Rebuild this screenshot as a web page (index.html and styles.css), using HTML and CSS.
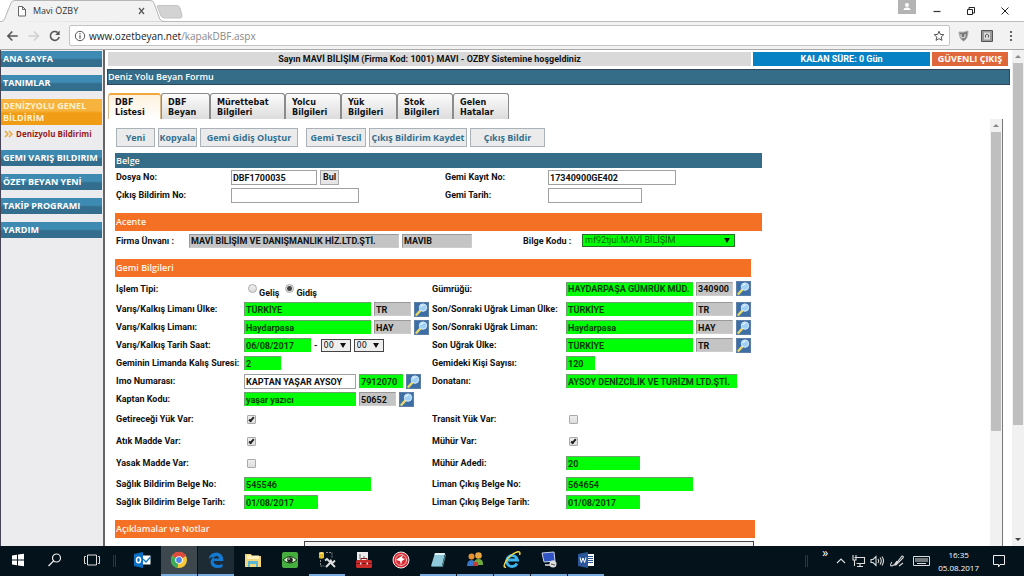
FILE: index.html
```html
<!DOCTYPE html>
<html lang="tr">
<head>
<meta charset="utf-8">
<title>Mavi ÖZBY</title>
<link rel="stylesheet" href="styles.css">
</head>
<body>
<svg class="defs" aria-hidden="true">
  <symbol id="lens" viewBox="0 0 15 15">
    <rect width="15" height="15" fill="#3d6ea5"/>
    <rect x=".5" y=".5" width="14" height="14" fill="none" stroke="#5c7fa8"/>
    <path d="M2.5 12.8 6.3 8.6" stroke="#e8d86a" stroke-width="2.4" stroke-linecap="round"/>
    <circle cx="9" cy="5.6" r="3.7" fill="#9fd0f5" stroke="#d8ecfb" stroke-width="1"/>
    <path d="M7 5a2.4 2.4 0 0 1 2.4-1.8" stroke="#fff" fill="none"/>
  </symbol>
</svg>

<header class="browser">
  <div class="tabstrip">
    <svg class="tab-shape" viewBox="0 0 190 22">
      <path d="M0 22C5 21 5 18 6.500 14L11 3Q12 .5 15 .5H150Q153 .5 154 3L159 17Q160 21.500 165 21.500" fill="#f2f2f2" stroke="#b5b5b5"/>
      <path d="M157 6Q157.500 5.500 159 5.500H177Q179 5.500 180 8L182 15Q182.500 18 180 18H165Q162 18 161 16Z" fill="#d3d3d3" stroke="#c4c4c4"/>
      <path d="M18.500 6.500h4l3 3v6.500h-7zM22.500 6.500v3h3" fill="#fff" stroke="#666"/>
      <path d="m139 8 5 6m0-6-5 6" stroke="#555" stroke-width="1.200"/>
    </svg>
    <span class="tab-title">Mavi ÖZBY</span>
    <div class="window-controls">
      <svg class="person" viewBox="0 0 18 14"><path fill="#b4b4b4" d="M0 0h18v14H0z"/><circle cx="9" cy="5" r="2" fill="#fff"/><path d="M5.500 10q0-2.500 3.500-2.500t3.500 2.500z" fill="#fff"/></svg>
      <svg viewBox="0 0 10 10"><path d="M1.500 5.500h7" stroke="#333" stroke-width="1.200"/></svg>
      <svg viewBox="0 0 10 10"><path d="M1.500 3.500h5v5h-5zM3 3V1.500h5.500V7H7" fill="none" stroke="#222"/></svg>
      <svg viewBox="0 0 10 10"><path d="m1.500 1.500 7 7m0-7-7 7" stroke="#222"/></svg>
    </div>
  </div>
  <div class="toolbar">
    <svg class="nav" viewBox="0 0 70 16">
      <path d="M18 8H8m4.500-4.500L8 8l4.500 4.500" fill="none" stroke="#555" stroke-width="1.600"/>
      <path d="M29 8h10m-4.500-4.500L39 8l-4.500 4.500" fill="none" stroke="#d0d0d0" stroke-width="1.600"/>
      <path d="M58.500 4.500A4.500 4.500 0 1 0 60 9" fill="none" stroke="#555" stroke-width="1.600"/><path d="M60.500 2.500v4.500H56z" fill="#555"/>
    </svg>
    <div class="address">
      <svg class="info" viewBox="0 0 12 12"><circle cx="6" cy="6" r="4.700" fill="none" stroke="#555"/><path d="M6 5.200v3.500M6 3v1.200" stroke="#555" stroke-width="1.200"/></svg>
      <span class="url">www.ozetbeyan.net<span class="path">/kapakDBF.aspx</span></span>
      <svg class="star" viewBox="0 0 12 12"><path d="m6 1.200 1.300 3.200 3.500.3-2.600 2.300.8 3.400L6 8.600l-3 1.800.8-3.400L1.200 4.700l3.500-.3z" fill="none" stroke="#555"/></svg>
    </div>
    <svg class="extensions" viewBox="0 0 74 16">
      <path d="M9 4q4.500 1 9-1-.2 8-4.500 10Q9.500 11 9 4z" fill="#777" stroke="#aaa"/><path d="M11 6v3q2 2 4 0V6" stroke="#eee" fill="none"/>
      <path d="M31.500 2.500h11v11h-11z" fill="#999" stroke="#555"/><path d="M34 4.500h6v7h-6z" fill="#ddd"/><path d="M35.500 9.500V7q1-1.500 1.500 0 .5-1.500 1.500 0v2.500" stroke="#555" fill="none"/>
      <g fill="#444"><circle cx="61" cy="4" r="1.100"/><circle cx="61" cy="8" r="1.100"/><circle cx="61" cy="12" r="1.100"/></g>
    </svg>
  </div>
</header>

<div class="page">
  <nav class="sidebar">
    <a class="menu" href="#">ANA SAYFA</a>
    <a class="menu" href="#">TANIMLAR</a>
    <a class="menu active" href="#">DENİZYOLU GENEL BİLDİRİM</a>
    <a class="submenu" href="#"><svg viewBox="0 0 9 8"><path d="m1 1 3 3-3 3M5 1l3 3-3 3" fill="none" stroke="#e9a73c" stroke-width="1.500"/></svg>Denizyolu Bildirimi</a>
    <a class="menu" href="#">GEMI VARIŞ BILDIRIM</a>
    <a class="menu" href="#">ÖZET BEYAN YENİ</a>
    <a class="menu" href="#">TAKİP PROGRAMI</a>
    <a class="menu" href="#">YARDIM</a>
  </nav>

  <main class="main">
    <div class="status">
      <div class="welcome">Sayın MAVİ BİLİŞİM (Firma Kod: 1001) MAVI - OZBY Sistemine hoşgeldiniz</div>
      <div class="remaining">KALAN SÜRE: 0 Gün</div>
      <a class="logout" href="#">GÜVENLI ÇIKIŞ</a>
    </div>
    <h1 class="title">Deniz Yolu Beyan Formu</h1>

    <div class="tabs">
      <button class="tab w-s current">DBF<br>Listesi</button>
      <button class="tab w-t">DBF<br>Beyan</button>
      <button class="tab w-l">Mürettebat<br>Bilgileri</button>
      <button class="tab w-m">Yolcu<br>Bilgileri</button>
      <button class="tab w-m">Yük<br>Bilgileri</button>
      <button class="tab w-m">Stok<br>Bilgileri</button>
      <button class="tab w-m">Gelen<br>Hatalar</button>
    </div>

    <div class="frame">
      <form class="form">
        <div class="actions">
          <button type="button" class="b40">Yeni</button>
          <button type="button" class="b40">Kopyala</button>
          <button type="button" class="b98 spaced">Gemi Gidiş Oluştur</button>
          <button type="button" class="b60">Gemi Tescil</button>
          <button type="button" class="b98">Çıkış Bildirim Kaydet</button>
          <button type="button" class="b75">Çıkış Bildir</button>
        </div>

        <h2 class="bar blue wide">Belge</h2>
        <div class="row belge">
          <label for="dosya">Dosya No:</label>
          <div class="cell"><input id="dosya" class="i86" value="DBF1700035"><button type="button" class="bul">Bul</button></div>
          <label for="kayit">Gemi Kayıt No:</label>
          <div class="cell"><input id="kayit" class="i128" value="17340900GE402"></div>
        </div>
        <div class="row belge">
          <label for="cikis">Çıkış Bildirim No:</label>
          <div class="cell"><input id="cikis" class="i128"></div>
          <label for="tarih">Gemi Tarih:</label>
          <div class="cell"><input id="tarih" class="i94"></div>
        </div>

        <h2 class="bar acente wide">Acente</h2>
        <div class="row agency">
          <label for="firma">Firma Ünvanı :</label>
          <div class="cell"><input id="firma" class="gray i210" value="MAVİ BİLİŞİM VE DANIŞMANLIK HİZ.LTD.ŞTİ."><input aria-label="Firma Kodu" class="gray i70" value="MAVIB"></div>
          <label for="bilge">Bilge Kodu :</label>
          <div class="cell"><span class="pick bilge"><select id="bilge"><option>mf92tjul:MAVİ BİLİŞİM</option></select></span></div>
        </div>

        <h2 class="bar gemi">Gemi Bilgileri</h2>
        <div class="row first">
          <span class="label">İşlem Tipi:</span>
          <div class="cell radios"><input type="radio" name="tip" id="gelis"><label for="gelis">Geliş</label><input type="radio" name="tip" id="gidis" checked><label for="gidis">Gidiş</label></div>
          <label for="gumruk">Gümrüğü:</label>
          <div class="cell"><input id="gumruk" class="green i127" value="HAYDARPAŞA GÜMRÜK MÜD."><input aria-label="Gümrük Kodu" class="gray i38" value="340900"><button type="button" class="find" aria-label="Gümrük ara"><svg><use href="#lens"/></svg></button></div>
        </div>
        <div class="row">
          <label for="vulke">Varış/Kalkış Limanı Ülke:</label>
          <div class="cell"><input id="vulke" class="green i127" value="TÜRKİYE"><input aria-label="Ülke Kodu" class="gray i38" value="TR"><button type="button" class="find" aria-label="Ülke ara"><svg><use href="#lens"/></svg></button></div>
          <label for="sulke">Son/Sonraki Uğrak Liman Ülke:</label>
          <div class="cell"><input id="sulke" class="green i127" value="TÜRKİYE"><input aria-label="Uğrak Ülke Kodu" class="gray i38" value="TR"><button type="button" class="find" aria-label="Uğrak ülke ara"><svg><use href="#lens"/></svg></button></div>
        </div>
        <div class="row">
          <label for="vliman">Varış/Kalkış Limanı:</label>
          <div class="cell"><input id="vliman" class="green i127" value="Haydarpasa"><input aria-label="Liman Kodu" class="gray i38" value="HAY"><button type="button" class="find" aria-label="Liman ara"><svg><use href="#lens"/></svg></button></div>
          <label for="sliman">Son/Sonraki Uğrak Liman:</label>
          <div class="cell"><input id="sliman" class="green i127" value="Haydarpasa"><input aria-label="Uğrak Liman Kodu" class="gray i38" value="HAY"><button type="button" class="find" aria-label="Uğrak liman ara"><svg><use href="#lens"/></svg></button></div>
        </div>
        <div class="row">
          <label for="vtarih">Varış/Kalkış Tarih Saat:</label>
          <div class="cell"><input id="vtarih" class="green i66" value="06/08/2017"><span>-</span><span class="pick"><select aria-label="Saat"><option>00</option></select></span><span class="pick"><select aria-label="Dakika"><option>00</option></select></span></div>
          <label for="sonulke">Son Uğrak Ülke:</label>
          <div class="cell"><input id="sonulke" class="green i127" value="TÜRKİYE"><input aria-label="Son Ülke Kodu" class="gray i38" value="TR"><button type="button" class="find" aria-label="Son ülke ara"><svg><use href="#lens"/></svg></button></div>
        </div>
        <div class="row">
          <label for="kalis">Geminin Limanda Kalış Suresi:</label>
          <div class="cell"><input id="kalis" class="green i38" value="2"></div>
          <label for="kisi">Gemideki Kişi Sayısı:</label>
          <div class="cell"><input id="kisi" class="green i30" value="120"></div>
        </div>
        <div class="row">
          <label for="imo">Imo Numarası:</label>
          <div class="cell"><input id="imo" class="i112" value="KAPTAN YAŞAR AYSOY"><input aria-label="Imo Kodu" class="green i44" value="7912070"><button type="button" class="find" aria-label="Imo ara"><svg><use href="#lens"/></svg></button></div>
          <label for="donatan">Donatanı:</label>
          <div class="cell"><input id="donatan" class="green i171" value="AYSOY DENİZCİLİK VE TURİZM LTD.ŞTİ."></div>
        </div>
        <div class="row">
          <label for="kaptan">Kaptan Kodu:</label>
          <div class="cell"><input id="kaptan" class="green i112" value="yaşar yazıcı"><input aria-label="Kaptan No" class="gray i38" value="50652"><button type="button" class="find" aria-label="Kaptan ara"><svg><use href="#lens"/></svg></button></div>
        </div>
        <div class="row tall">
          <label for="yuk">Getireceği Yük Var:</label>
          <div class="cell"><input type="checkbox" id="yuk" checked></div>
          <label for="transit">Transit Yük Var:</label>
          <div class="cell"><input type="checkbox" id="transit"></div>
        </div>
        <div class="row tall">
          <label for="atik">Atık Madde Var:</label>
          <div class="cell"><input type="checkbox" id="atik" checked></div>
          <label for="muhur">Mühür Var:</label>
          <div class="cell"><input type="checkbox" id="muhur" checked></div>
        </div>
        <div class="row tall">
          <label for="yasak">Yasak Madde Var:</label>
          <div class="cell"><input type="checkbox" id="yasak"></div>
          <label for="adet">Mühür Adedi:</label>
          <div class="cell"><input id="adet" class="green i74" value="20"></div>
        </div>
        <div class="row papers">
          <label for="sno">Sağlık Bildirim Belge No:</label>
          <div class="cell"><input id="sno" class="green i127" value="545546"></div>
          <label for="lno">Liman Çıkış Belge No:</label>
          <div class="cell"><input id="lno" class="green i127" value="564654"></div>
        </div>
        <div class="row">
          <label for="starih">Sağlık Bildirim Belge Tarih:</label>
          <div class="cell"><input id="starih" class="green i74" value="01/08/2017"></div>
          <label for="ltarih">Liman Çıkış Belge Tarih:</label>
          <div class="cell"><input id="ltarih" class="green i74" value="01/08/2017"></div>
        </div>

        <h2 class="bar notes">Açıklamalar ve Notlar</h2>
        <textarea class="note" aria-label="Açıklamalar ve Notlar"></textarea>
      </form>
      <div class="scroll inner"><i class="up"></i><i class="thumb"></i></div>
    </div>
  </main>
  <div class="scroll outer"><i class="up"></i><i class="thumb"></i><i class="down"></i></div>
</div>

<footer class="taskbar">
  <div class="apps">
    <button class="app" aria-label="Başlat"><svg viewBox="0 0 18 18"><path d="m3 4.500 5-.7v4.700H3zm6-.9 6-.8v5.700H9zM3 9.500h5v4.700l-5-.7zm6 0h6v5.700l-6-.8z" fill="#fff"/></svg></button>
    <button class="app" aria-label="Ara"><svg viewBox="0 0 18 18"><circle cx="10.500" cy="7" r="4" fill="none" stroke="#eee" stroke-width="1.200"/><path d="m7.500 10-5 5" stroke="#eee" stroke-width="1.300"/></svg></button>
    <button class="app" aria-label="Görev görünümü"><svg viewBox="0 0 18 18"><path d="M4.500 4h9v10h-9zM3 5.500H1.500v7H3m12-7h1.500v7H15" fill="none" stroke="#ddd"/></svg></button>
    <span class="divider"></span>
    <button class="app" aria-label="Outlook"><svg viewBox="0 0 18 18"><path d="M8 4.500h9.500v9H8z" fill="#fff"/><path d="m10 8 3 3 4.500-5" stroke="#1479c9" stroke-width="1.300" fill="none"/><path d="m1 3 9-2v16l-9-2z" fill="#0b6fc2"/><ellipse cx="5.500" cy="9" rx="2" ry="2.800" fill="none" stroke="#fff" stroke-width="1.500"/></svg></button>
    <button class="app lit run" aria-label="Chrome"><svg viewBox="0 0 18 18"><circle cx="9" cy="9" r="8" fill="#f4c93a"/><path d="M9 9 2 5A8 8 0 0 1 16 5z" fill="#dd4b3e"/><path d="M9 9 2 5a8 8 0 0 0 5.500 12z" fill="#3faa59"/><circle cx="9" cy="9" r="3.800" fill="#fff"/><circle cx="9" cy="9" r="2.900" fill="#4a87e8"/></svg></button>
    <button class="app lit2 run" aria-label="Edge"><svg viewBox="0 0 18 18"><path d="M1.500 8Q3 1.500 9.500 1.500q7 .5 7 8.500H6.500q.5 4 5 4 2 0 4-1v3q-2 1-4.500 1Q4 17 3.500 11 3.500 8 6.500 6 3.500 6 1.500 8zm5-.5h5.500Q12 5 9.500 5T6.500 7.500z" fill="#1479d1"/></svg></button>
    <button class="app" aria-label="Dosya Gezgini"><svg viewBox="0 0 18 18"><path d="M1 3h6l1 2h9v11H1z" fill="#f3d57c"/><path d="M3 4.500h12V8H3z" fill="#fff2bd"/><path d="M4 10h10v6h-2v-3H6v3H4z" fill="#5ab6d5"/></svg></button>
    <button class="app" aria-label="Göz"><svg viewBox="0 0 18 18"><rect x="1" y="1" width="16" height="16" rx="2" fill="#46ad3f"/><path d="M2 9q7-7 14 0-7 6-14 0z" fill="#d8f0c8" stroke="#143c12"/><circle cx="9" cy="9" r="2.800" fill="#222"/><circle cx="8" cy="8" r=".8" fill="#fff"/></svg></button>
    <button class="app run" aria-label="SQL"><svg viewBox="0 0 18 18"><path d="M1 2v5q2.500 1.500 5 0V2z" fill="#e5b92f"/><ellipse cx="3.500" cy="2" rx="2.500" ry="1" fill="#ffe27a"/><path d="M8 1.500h6v5M2.500 9v6h4" fill="none" stroke="#888" stroke-dasharray="2 1"/><path d="m8 16 6-6" stroke="#ddd" stroke-width="2"/><path d="M13 8.500q-1 3 2 3l2-2M7 9.500l2-1.500 2 2 6 6" fill="none" stroke="#ddd" stroke-width="1.800"/></svg></button>
    <button class="app" aria-label="Araçlar"><svg viewBox="0 0 18 18"><path d="M2 1h11v9H2z" fill="#eee"/><path d="M4 3h2v5H4zm4 2h2v3H8z" fill="#aaa"/><rect x="1" y="9" width="16" height="8" rx="1.500" fill="#c92a2a"/><path d="M6 9V7.500h6V9M1 12.500h16" fill="none" stroke="#821515"/><path d="M5 11.500h1.500v2H5zm6.500 0H13v2h-1.500z" fill="#ddd"/></svg></button>
    <button class="app" aria-label="Radar"><svg viewBox="0 0 18 18"><circle cx="9" cy="9" r="8" fill="#d52b35" stroke="#eee"/><circle cx="9" cy="9" r="5.500" fill="none" stroke="#f5b0b0"/><path d="m4 9 7-5-1 3 3 1-3 2-1 4-1-4z" fill="#fff"/></svg></button>
    <button class="app run" aria-label="Not Defteri"><svg viewBox="0 0 18 18"><path d="M6 2h10l-3 13H2z" fill="#8fc9da"/><path d="M6 2h10l-.5 2H5.500z" fill="#e4f2f5"/><path d="M2 15h11l3-12 1 1-3 12H3z" fill="#4b808f"/></svg></button>
    <button class="app run" aria-label="Kişiler"><svg viewBox="0 0 18 18"><circle cx="5.500" cy="5.500" r="3" fill="#e99131"/><circle cx="12.500" cy="4.500" r="3.300" fill="#e9a540"/><path d="M1 15q0-6 4.500-6T10 15z" fill="#3876c9"/><path d="M8 13q0-5 4.500-5t4.500 5v1H8z" fill="#70aa3c"/><path d="M7 11h5v4H7z" fill="#c63b35"/></svg></button>
    <button class="app run" aria-label="Internet Explorer"><svg viewBox="0 0 18 18"><path d="M14 12.500A5.500 5.500 0 1 1 14.500 9H5" fill="none" stroke="#3db4ec" stroke-width="2.800"/><path d="M3 16Q0 17 2 12 7 3 14 1q4-1 2.500 3" fill="none" stroke="#f1d34a" stroke-width="1.500"/></svg></button>
    <button class="app run" aria-label="Uzak Masaüstü"><svg viewBox="0 0 18 18"><path d="m2 2 12-1 1 9-11 1z" fill="#3154c4" stroke="#c7d1e8"/><path d="M5 13h6v2H5z" fill="#aaa"/><circle cx="13" cy="13" r="3.500" fill="#ddd"/><path d="m11 13 4 1" stroke="#555"/></svg></button>
    <button class="app run" aria-label="Word"><svg viewBox="0 0 18 18"><path d="M9 3h8v12H9z" fill="#fff"/><path d="M11 5.500h5m-5 2h5m-5 2h5m-5 2h5" stroke="#2b579a"/><path d="m1 3 10-2v16L1 15z" fill="#2b579a"/><path d="m3 6.500 1.300 5L6 7l1.600 4.500L9 6.500" fill="none" stroke="#fff"/></svg></button>
  </div>
  <div class="tray">
    <span class="divider"></span>
    <span class="more">»</span>
    <svg class="tray-icons" viewBox="0 0 96 18">
      <g fill="none" stroke="#ddd" stroke-width="1.100">
        <path d="m2 11 4-4 4 4"/>
        <path d="M19.500 5.500h10v6h-8M25 12v2m-3 .5h6M18 3v5h3V3m-1.500 5v6"/>
        <path d="M36 7.500h2l3-3v9l-3-3h-2zm7-.5q1.500 2 0 4m2-5.500q2.500 3.500 0 7m2-8q3 4.500 0 9"/>
        <path d="m60 13 7-9q2 0 1 2l-7 7zm-3-3q-3 4 0 4 3-1 5-5m2 5 4-3"/>
        <path d="M78.500 4.500h16v9h-16zM80 7h13m-13 2h13m-11 2.500h9" stroke-width="1"/>
      </g>
    </svg>
    <time class="clock">16:35<br>05.08.2017</time>
    <svg class="notice" viewBox="0 0 14 14"><path d="M1.500 1.500h11v9H8L6.500 13v-2.500h-5z" fill="none" stroke="#eee"/></svg>
  </div>
</footer>
</body>
</html>
```
FILE: styles.css
```css
* { box-sizing: border-box; }

body {
  margin: 0;
  height: 100vh;
  overflow: hidden;
  display: flex;
  flex-direction: column;
  background: #fff;
  color: #111;
  font: bold 9px/12px Roboto, "Noto Sans", sans-serif;
}

svg { display: block; flex: none; }
a { text-decoration: none; }
button, input, select, textarea { font: inherit; color: inherit; margin: 0; }
.defs { position: absolute; width: 0; height: 0; }

/* Browser window */
.browser { flex: none; font: 11px/16px "Open Sans", "Noto Sans", sans-serif; }
.tabstrip { height: 22px; display: flex; position: relative; border-bottom: 1px solid #bbb; }
.tab-shape { width: 190px; height: 22px; }
.tab-title { position: absolute; left: 33px; top: 3px; font-size: 9px; color: #333; }
.window-controls { margin-left: auto; display: flex; gap: 24px; padding-right: 14px; align-items: center; }
.window-controls svg { width: 10px; height: 10px; }
.window-controls .person { width: 18px; height: 14px; margin-right: -8px; align-self: flex-start; }
.toolbar { height: 28px; display: flex; align-items: center; background: #f2f2f2; border-bottom: 1px solid #aaa; }
.nav { width: 69px; height: 16px; }
.address { flex: 1; height: 21px; display: flex; align-items: center; gap: 3px; padding: 0 4px; background: #fff; border: 1px solid #c4c4c4; border-radius: 2px; font-size: 10px; }
.info, .star { width: 12px; height: 12px; }
.url { flex: 1; color: #222; }
.path { color: #888; }
.extensions { width: 74px; height: 16px; }

/* Application */
.page { flex: 1; min-height: 0; display: flex; }
.sidebar { width: 105px; flex: none; display: flex; flex-direction: column; gap: 8px; padding: 1px 1px 0 0; background: #ececee; border-left: 1px solid #445; border-right: 2px solid #666; font-family: "Open Sans", "Noto Sans", sans-serif; }
.menu { padding: 2px; background: linear-gradient(#3d8bb2 45%, #346e8f 55%); color: #fff; white-space: nowrap; }
.menu.active { padding: 1px 2px; white-space: normal; background: linear-gradient(#f6b33d 45%, #f09c14 55%); color: #fff1cc; }
.submenu { display: flex; align-items: center; gap: 3px; padding-left: 3px; height: 12px; margin: -5px 0 2px; color: #971a1a; font-size: 8px; white-space: nowrap; }
.submenu svg { width: 9px; height: 8px; }

.main { flex: 1; min-width: 0; display: flex; flex-direction: column; padding-left: 2px; }
.status { display: flex; gap: 2px; padding: 2px 4px 3px 1px; text-align: center; line-height: 14px; }
.welcome { flex: 1; background: #d9d9d9; }
.remaining { width: 177px; background: #0681c4; color: #fff; }
.logout { width: 76px; background: #df683a; color: #fff; font-family: "Open Sans", sans-serif; white-space: nowrap; }
.title { margin: 0 2px 0 0; height: 16px; border: 1px solid #30465a; background: #356c88; color: #fff; font: 600 9px/14px "Open Sans", "Noto Sans", sans-serif; }

.tabs { display: flex; padding: 8px 0 0 1px; }
.tab { height: 26px; padding: 1px 0 0 6px; border: 1px solid #8b8b8b; border-bottom: 0; border-radius: 3px 3px 0 0; background: linear-gradient(#fcfcfc, #dcdcdc); text-align: left; font: bold 9px/10px "DejaVu Sans Condensed", "DejaVu Sans", sans-serif; }
.tab.current { border-color: #d8b98c; border-top: 2px solid #f2a93b; padding-top: 0; background: linear-gradient(#fdf1dc, #fff); }
.w-s { width: 53px; }
.w-t { width: 49px; }
.w-l { width: 75px; }
.w-m { width: 56px; }

.frame { flex: 1; min-height: 0; display: flex; margin-right: 9px; border-right: 1px solid #777; overflow: hidden; }
.form { flex: 1; min-width: 0; padding: 9px 0 0 8px; }
.actions { display: flex; gap: 3px; margin: 0 0 6px 1px; }
.actions button { height: 19px; padding: 0; border: 1px solid #a9b2b8; background: #ebebeb; color: #35708f; font-family: "Open Sans", "Noto Sans", sans-serif; white-space: nowrap; }
.b40 { width: 39px; }
.b60 { width: 60px; }
.b75 { width: 75px; }
.b98 { width: 98px; }
.actions .spaced { margin-right: 5px; }

.bar { margin: 0; height: 18px; padding-left: 1px; max-width: 636px; background: #f37024; color: #fff6e8; font: 600 9px/18px "Open Sans", "Noto Sans", sans-serif; }
.bar.wide { max-width: 647px; }
.bar.blue { height: 15px; line-height: 15px; background: #356c88; }
.bar.acente { margin-top: 9px; }
.bar.gemi { margin-top: 9px; }
.bar.notes { margin-top: 9px; max-width: 640px; }

.row { display: grid; grid-template-columns: 129px 187px 135px 1fr; height: 18px; align-items: center; white-space: nowrap; }
.row > label, .label { padding-left: 1px; }
.row.belge { grid-template-columns: 116px 213px 104px 1fr; }
.row.agency { grid-template-columns: 74px 333px 60px 1fr; height: 19px; }
.row.first { height: 23px; }
.row.tall { height: 22px; }
.row.papers { margin-top: 1px; }
.cell { display: flex; align-items: center; gap: 3px; }
.cell input:not([type]) { height: 15px; padding: 1px 1px 0; border: 1px solid #a0a0a0; border-radius: 0; background: #fff; }
.cell input.green { height: 14px; border-color: #6f9f6f #0f0 #0f0 #6f9f6f; background: #00ff06; color: #063c06; }
.cell input.gray { height: 14px; border-color: #999 #ccc #ccc #999; background: #c4c4c4; }
.i30 { width: 29px; }
.i38 { width: 37px; }
.i44 { width: 44px; }
.i66 { width: 67px; }
.i70 { width: 70px; }
.i74 { width: 74px; }
.i86 { width: 86px; }
.i94 { width: 94px; }
.i112 { width: 112px; }
.i127 { width: 127px; }
.i128 { width: 128px; }
.i171 { width: 171px; }
.i210 { width: 210px; }
.bul { height: 15px; padding: 0 2px; border: 1px solid #aaa; background: #e6e6e6; }
.find { width: 15px; height: 15px; padding: 0; border: 0; background: none; }
.find svg { width: 15px; height: 15px; }

.pick { position: relative; display: block; }
.pick::after { content: ""; position: absolute; right: 5px; top: 4px; border: 3px solid transparent; border-top: 5px solid #111; border-bottom: 0; pointer-events: none; }
.pick select { display: block; width: 30px; height: 13px; padding: 0 2px; appearance: none; border: 1px solid #444; border-radius: 0; background: #eee; font: 9px/11px "DejaVu Sans Condensed", sans-serif; }
.pick.bilge select { width: 153px; background: #00ff06; color: #075c07; border-color: #286a28; font: 9px/11px Roboto, sans-serif; }

input[type=radio], input[type=checkbox] { appearance: none; width: 9px; height: 9px; border: 1px solid #aaa; background: linear-gradient(#eee, #ddd); }
input[type=radio] { border-radius: 50%; margin-left: 4px; }
input[type=radio]:checked { background: radial-gradient(circle, #444 0 2px, #e4e4e4 3px); }
input[type=checkbox] { position: relative; margin-left: 3px; border-radius: 1px; }
input[type=checkbox]:checked::after { content: ""; position: absolute; left: 2px; top: 0; width: 1px; height: 4px; border: solid #222; border-width: 0 2px 2px 0; rotate: 40deg; }
.radios { gap: 2px; }
.radios label { padding-top: 9px; }

.note { display: block; width: 450px; height: 40px; margin: 3px 0 0 189px; border: 1px solid #444; background: #f2f2f2; resize: none; }

.scroll { display: flex; flex-direction: column; align-items: center; width: 12px; flex: none; background: #f1f1f1; }
.up, .down { margin: 5px 0; border: 3px solid transparent; border-bottom-color: #888; border-top: 0; }
.down { margin-top: auto; border-top: 3px solid #444; border-bottom: 0; }
.thumb { width: 10px; height: 70%; background: #bfbfbf; }
.outer .thumb { height: 73%; }

/* Taskbar */
.taskbar { height: 30px; flex: none; display: flex; justify-content: space-between; background: #04121b; color: #fff; font: 9px/13px "Open Sans", "Noto Sans", sans-serif; }
.apps { display: flex; }
.app { width: 36px; margin-right: 1px; padding: 0; border: 0; border-bottom: 2px solid transparent; background: none; display: flex; align-items: center; justify-content: center; }
.app svg { width: 18px; height: 18px; }
.app.run { border-bottom-color: #76a9dc; }
.app.lit { background-color: #3c474e; }
.app.lit2 { background-color: #1d2b34; }
.divider { width: 3px; height: 12px; margin: 9px 8px 0 2px; border: solid #2b363d; border-width: 0 1px; }
.tray { display: flex; align-items: center; padding-right: 18px; }
.tray .divider { margin-top: 0; }
.more { align-self: flex-start; margin: 0 7px 0 6px; font-size: 12px; }
.tray-icons { width: 96px; height: 18px; margin-right: 7px; }
.clock { text-align: center; margin-right: 13px; font-size: 8px; }
.notice { width: 14px; height: 14px; }
```
